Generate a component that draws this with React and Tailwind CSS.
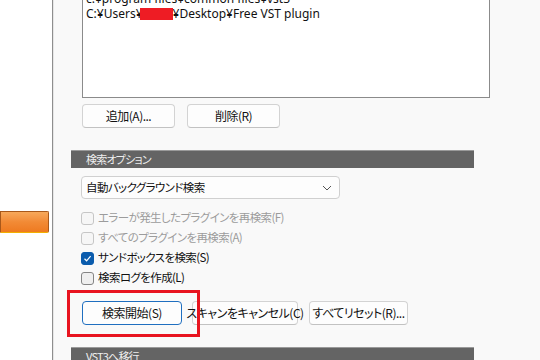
import React from "react";

function Btn({ children, className = "", blue }) {
  return (
    <div
      className={`h-[24px] flex items-center justify-center whitespace-nowrap rounded-[4px] border bg-[#fdfdfd] text-[12px] tracking-[-0.5px] text-[#111] ${
        blue ? "border-[#1f6fc0]" : "border-[#d3d3d3] border-b-[#c2c2c2]"
      } ${className}`}
    >
      {children}
    </div>
  );
}

function Check({ state, label }) {
  const disabled = state === "disabled";
  const checked = state === "checked";
  return (
    <div className="h-[20px] flex items-center">
      <div
        className={`w-[13px] h-[13px] rounded-[3px] border flex items-center justify-center ${
          checked
            ? "bg-[#0b5cad] border-[#0b5cad]"
            : disabled
            ? "bg-[#f6f6f6] border-[#c6c6c6]"
            : "bg-[#efefef] border-[#858585]"
        }`}
      >
        {checked && (
          <svg width="9" height="9" viewBox="0 0 9 9">
            <path d="M1.5 4.8 L3.6 6.8 L7.6 2.2" fill="none" stroke="white" strokeWidth="1.2" />
          </svg>
        )}
      </div>
      <span className={`ml-[4px] text-[11.5px] tracking-[-0.6px] whitespace-nowrap ${disabled ? "text-[#9c9c9c]" : "text-[#111]"}`}>
        {label}
      </span>
    </div>
  );
}

function Header({ children, className = "" }) {
  return (
    <div className={`w-[403px] h-[18px] bg-[#646464] border-t border-t-[#9a9a9a] flex items-center pl-[15px] text-[11px] tracking-[-0.8px] text-[#eeeeee] ${className}`}>
      {children}
    </div>
  );
}

export default function App() {
  return (
    <div
      className="w-[540px] h-[360px] overflow-hidden flex bg-white [font-feature-settings:'palt']"
      style={{ fontFamily: '"Noto Sans CJK JP", "Noto Sans", sans-serif' }}
    >
      <div className="w-[53px] shrink-0 bg-white border-r border-r-[#8e8e8e]">
        <div className="mt-[211px] w-[49px] h-[22px] rounded-r-[2px] border border-[#a9581a] border-b-[#f2b000] bg-gradient-to-b from-[#f7a85a] via-[#f28a35] to-[#ee7a1f]" />
      </div>
      <div className="w-[1px] bg-[#e6e6e6]" />
      <div className="relative flex-1 bg-[#f9f9f9] pl-[17px]">
        <div className="ml-[11px] w-[408px] h-[98px] bg-white border border-t-0 border-[#8b8b8b] overflow-hidden">
          <div
            className="-mt-[9px] pl-[3px] leading-[15px] text-[#111] whitespace-nowrap"
            style={{ fontFamily: '"Noto Sans", sans-serif', fontSize: "12px" }}
          >
            <div>c:¥program files¥common files¥vst3</div>
            <div className="flex items-center">
              <span>C:¥Users¥</span>
              <span className="inline-block -ml-[3px] w-[33px] h-[12px] bg-[#ee1c24]" />
              <span>¥Desktop¥Free VST plugin</span>
            </div>
          </div>
        </div>
        <div className="ml-[11px] mt-[6px] flex gap-[12px]">
          <Btn className="w-[93px]">追加(A)...</Btn>
          <Btn className="w-[93px]">削除(R)</Btn>
        </div>
        <Header className="mt-[22px]">検索オプション</Header>
        <div className="ml-[10px] mt-[8px] w-[259px] h-[23px] rounded-[4px] border border-[#d0d0d0] bg-[#fdfdfd] flex items-center justify-between pl-[4px] pr-[7px] text-[11.5px] tracking-[-0.6px] text-[#111]">
          <span>自動バックグラウンド検索</span>
          <svg width="10" height="6" viewBox="0 0 10 6">
            <path d="M1 1 L5 5 L9 1" fill="none" stroke="#555" strokeWidth="1" />
          </svg>
        </div>
        <div className="ml-[10px] mt-[9px] flex flex-col">
          <Check state="disabled" label="エラーが発生したプラグインを再検索(F)" />
          <Check state="disabled" label="すべてのプラグインを再検索(A)" />
          <Check state="checked" label="サンドボックスを検索(S)" />
          <Check state="unchecked" label="検索ログを作成(L)" />
        </div>
        <div className="ml-[11px] mt-[13px] flex">
          <Btn blue className="w-[100px]">検索開始(S)</Btn>
          <Btn className="ml-[10px] w-[106px] overflow-visible">スキャンをキャンセル(C)</Btn>
          <Btn className="ml-[11px] w-[99px]">すべてリセット(R)...</Btn>
        </div>
        <Header className="mt-[22px]">VST3へ移行</Header>
        <div className="absolute left-[13px] top-[290px] w-[133px] h-[47px] border-[3px] border-[#e8141f]" />
      </div>
    </div>
  );
}
